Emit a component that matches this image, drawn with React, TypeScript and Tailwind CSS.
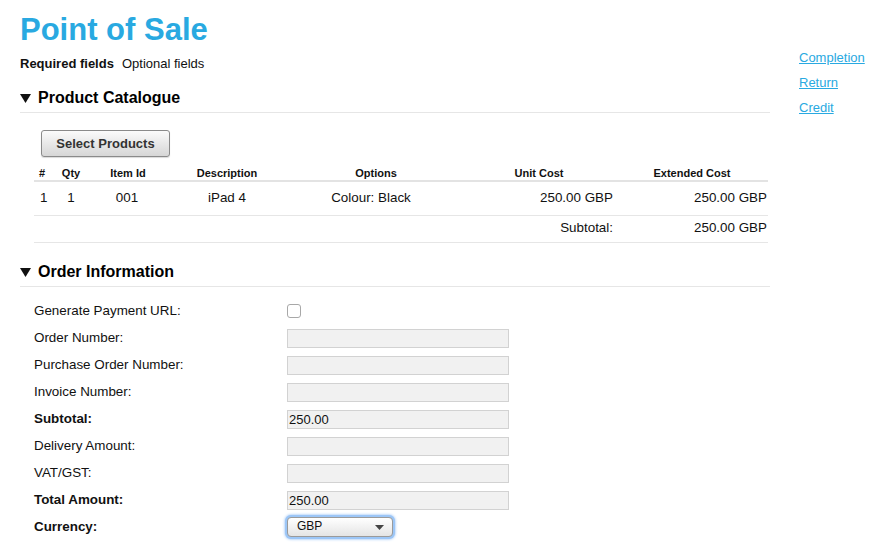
const fields = [
    { label: "Order Number:", bold: false, value: "" },
    { label: "Purchase Order Number:", bold: false, value: "" },
    { label: "Invoice Number:", bold: false, value: "" },
    { label: "Subtotal:", bold: true, value: "250.00" },
    { label: "Delivery Amount:", bold: false, value: "" },
    { label: "VAT/GST:", bold: false, value: "" },
    { label: "Total Amount:", bold: true, value: "250.00" },
];

const Arrow = () => (
    <svg width="11" height="10" viewBox="0 0 11 10" className="mr-[7px] shrink-0">
        <polygon points="0,1 11,1 5.5,10" fill="#111" />
    </svg>
);

const SectionHeader = ({ title }: { title: string }) => (
    <div className="flex items-center border-b border-[#e6e6e6] pb-[4px] h-[25px]">
        <Arrow />
        <span className="text-[16px] leading-[20px] font-bold text-black">{title}</span>
    </div>
);

const App = () => {
    return (
        <div className="flex pl-[20px] text-[13.4px] text-[#111] font-['Liberation_Sans',Arial,sans-serif] bg-white min-h-[554px]">
            <div className="w-[750px]">
                <h1 className="pt-[12px] text-[31px] leading-[36px] font-bold text-[#29a9e1]">Point of Sale</h1>
                <div className="mt-[8px] leading-[16px] text-[13px]">
                    <span className="font-bold">Required fields</span>
                    <span className="ml-[8px]">Optional fields</span>
                </div>

                <div className="mt-[16px]">
                    <SectionHeader title="Product Catalogue" />
                </div>

                <div className="pl-[14px] pr-[2px]">
                    <button type="button" className="mt-[17px] ml-[7px] h-[27px] w-[129px] rounded-[3px] border border-[#8a8a8a] bg-gradient-to-b from-[#fbfbfb] to-[#d6d6d6] text-[13px] font-bold text-[#333] shadow-[0_1px_1px_rgba(0,0,0,0.15)]">
                        Select Products
                    </button>

                    <table className="mt-[6px] w-[734px] table-fixed border-collapse">
                        <colgroup>
                            <col className="w-[16px]" />
                            <col className="w-[42px]" />
                            <col className="w-[72px]" />
                            <col className="w-[126px]" />
                            <col className="w-[172px]" />
                            <col className="w-[154px]" />
                            <col className="w-[152px]" />
                        </colgroup>
                        <thead>
                            <tr className="border-b-2 border-[#e3e3e3] text-[11px] leading-[14px] font-bold">
                                <th className="pt-[3px] text-left pl-[5px] font-bold">#</th>
                                <th className="pt-[3px] font-bold">Qty</th>
                                <th className="pt-[3px] font-bold">Item Id</th>
                                <th className="pt-[3px] font-bold">Description</th>
                                <th className="pt-[3px] font-bold">Options</th>
                                <th className="pt-[3px] font-bold">Unit Cost</th>
                                <th className="pt-[3px] font-bold">Extended Cost</th>
                            </tr>
                        </thead>
                        <tbody>
                            <tr className="h-[34px] border-b border-[#e6e6e6]">
                                <td className="text-left pl-[6px]">1</td>
                                <td className="text-center">1</td>
                                <td className="text-center pr-[2px]">001</td>
                                <td className="text-center">iPad 4</td>
                                <td className="text-center pr-[10px]">Colour: Black</td>
                                <td className="text-right pr-[3px]">250.00 GBP</td>
                                <td className="text-right pr-[1px]">250.00 GBP</td>
                            </tr>
                            <tr className="h-[27px] border-b border-[#e6e6e6]">
                                <td colSpan={5}></td>
                                <td className="text-right pr-[3px]">Subtotal:</td>
                                <td className="text-right pr-[1px]">250.00 GBP</td>
                            </tr>
                        </tbody>
                    </table>
                </div>

                <div className="mt-[19px]">
                    <SectionHeader title="Order Information" />
                </div>

                <div className="mt-[11px] pl-[14px]">
                    <div className="flex items-center h-[27px]">
                        <label className="w-[253px]">Generate Payment URL:</label>
                        <input type="checkbox" className="appearance-none w-[14px] h-[14px] rounded-[3px] border border-[#a8a8a8] bg-white" />
                    </div>
                    {fields.map((f) => (
                        <div key={f.label} className="flex items-center h-[27px]">
                            <label className={`w-[253px] ${f.bold ? "font-bold" : ""}`}>{f.label}</label>
                            <input type="text" readOnly value={f.value} className="w-[222px] h-[19px] border border-[#d2d2d2] bg-[#f1f1f1] px-[1px] text-[13px] leading-[17px] outline-none" />
                        </div>
                    ))}
                    <div className="flex items-center h-[27px]">
                        <label className="w-[251px] font-bold">Currency:</label>
                        <div className="rounded-[6px] p-[2px] bg-[#9cc6f7] shadow-[0_0_3px_#7fb3f2]">
                            <div className="flex items-center justify-between w-[106px] h-[20px] rounded-[4px] border border-[#9a9a9a] bg-gradient-to-b from-[#ffffff] to-[#e4e4e4] pl-[9px] pr-[8px] text-[12px] leading-[16px]">
                                <span className="-mt-[2px]">GBP</span>
                                <svg width="9" height="5" viewBox="0 0 9 5">
                                    <polygon points="0,0 9,0 4.5,5" fill="#444" />
                                </svg>
                            </div>
                        </div>
                    </div>
                </div>
            </div>

            <div className="ml-[29px] mt-[50px] flex flex-col text-[13px] leading-[16px] text-[#29a9e1]">
                <a href="#" className="underline">Completion</a>
                <a href="#" className="underline mt-[9px]">Return</a>
                <a href="#" className="underline mt-[9px]">Credit</a>
            </div>
        </div>
    );
};

export default App;
